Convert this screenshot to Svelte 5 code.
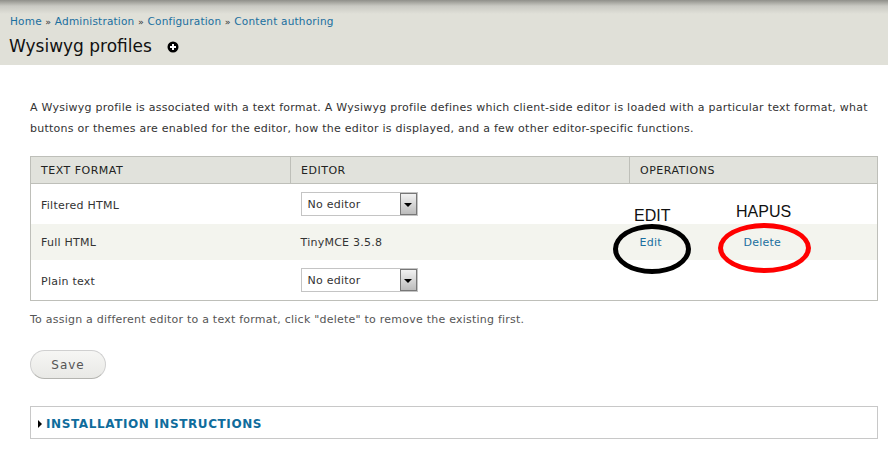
<script>
    const rows = [
        { format: 'Filtered HTML', select: true },
        { format: 'Full HTML', select: false },
        { format: 'Plain text', select: true }
    ];
</script>

<div class="page">
    <header class="head">
        <nav class="crumbs">
            <a href="#home">Home</a><span class="sep">»</span><a href="#admin">Administration</a><span class="sep">»</span><a href="#config">Configuration</a><span class="sep">»</span><a href="#content">Content authoring</a>
        </nav>
        <h1>
            Wysiwyg profiles
            <svg class="plus" viewBox="0 0 12 12" width="12" height="12">
                <circle cx="6" cy="6" r="5.5" fill="#000" />
                <path d="M6 3v6M3 6h6" stroke="#fff" stroke-width="2" />
            </svg>
        </h1>
    </header>

    <main class="content">
        <p class="intro">
            A Wysiwyg profile is associated with a text format. A Wysiwyg profile defines which client-side editor is loaded with a particular text format, what<br />
            buttons or themes are enabled for the editor, how the editor is displayed, and a few other editor-specific functions.
        </p>

        <div class="table-wrap">
            <table>
                <thead>
                    <tr>
                        <th class="col-format">TEXT FORMAT</th>
                        <th class="col-editor">EDITOR</th>
                        <th>OPERATIONS</th>
                    </tr>
                </thead>
                <tbody>
                    {#each rows as row}
                        <tr class:shaded={!row.select}>
                            <td class="name">{row.format}</td>
                            <td>
                                {#if row.select}
                                    <div class="select">
                                        <span class="value">No editor</span>
                                        <span class="arrow"></span>
                                    </div>
                                {:else}
                                    TinyMCE 3.5.8
                                {/if}
                            </td>
                            <td class="ops">
                                {#if !row.select}
                                    <a class="edit" href="#edit">Edit</a>
                                    <a class="delete" href="#delete">Delete</a>
                                {/if}
                            </td>
                        </tr>
                    {/each}
                </tbody>
            </table>

            <span class="note note-edit">EDIT</span>
            <span class="note note-hapus">HAPUS</span>
            <span class="ring ring-edit"></span>
            <span class="ring ring-delete"></span>
        </div>

        <p class="hint">To assign a different editor to a text format, click "delete" to remove the existing first.</p>

        <button class="save" type="button">Save</button>

        <div class="fieldset">
            <span class="triangle"></span>
            <a href="#install">INSTALLATION INSTRUCTIONS</a>
        </div>
    </main>
</div>

<style>
    :global(body) {
        background: #fff;
    }

    .page {
        width: 888px;
        height: 449px;
        overflow: hidden;
        font-family: "DejaVu Sans", sans-serif;
        font-size: 11px;
        letter-spacing: 0.25px;
        color: #333;
    }

    a {
        color: #1a6f9f;
        text-decoration: none;
    }

    .head {
        height: 65px;
        box-sizing: border-box;
        padding: 15px 10px 0;
        background: linear-gradient(#8f8f8a, #c9c9c3 6px, #e0e0d8 14px);
    }

    .crumbs {
        height: 14px;
        line-height: 13px;
        font-size: 10.5px;
        letter-spacing: 0.2px;
    }

    .sep {
        margin: 0 3.5px;
        font-size: 9.5px;
        color: #333;
    }

    h1 {
        margin: 5px 0 0 -1px;
        font-size: 17px;
        line-height: 24px;
        font-weight: 400;
        letter-spacing: 0;
        color: #111;
        display: flex;
        align-items: center;
        gap: 15px;
    }

    .plus {
        margin-top: 2px;
    }

    .content {
        padding: 0 10px 0 30px;
    }

    .intro {
        margin: 32px 0 0;
        line-height: 21px;
        white-space: nowrap;
    }

    .table-wrap {
        position: relative;
        margin-top: 17px;
    }

    table {
        width: 848px;
        border-collapse: collapse;
        table-layout: fixed;
        border: 1px solid #bebfb9;
    }

    th {
        height: 27px;
        padding: 0 10px;
        box-sizing: border-box;
        background: #e1e2dc;
        border-bottom: 1px solid #bebfb9;
        border-left: 1px solid #bebfb9;
        font-weight: 400;
        letter-spacing: 0.5px;
        text-align: left;
        color: #222;
    }

    th:first-child {
        border-left: 0;
    }

    .col-format {
        width: 260px;
    }

    .col-editor {
        width: 339px;
    }

    td {
        height: 40px;
        padding: 0 10px;
        box-sizing: border-box;
        color: #333;
    }

    tr:last-child td {
        height: 41px;
    }

    td.name {
        padding-top: 4px;
    }

    .shaded td {
        height: 36px;
        padding-top: 2px;
        background: #f3f4ee;
    }

    .select {
        display: flex;
        align-items: stretch;
        width: 117px;
        height: 24px;
        box-sizing: border-box;
        border: 1px solid #c4c4c4;
        background: #fff;
        font-size: 11px;
    }

    .value {
        flex: 1;
        align-self: center;
        padding: 2px 0 0 6px;
    }

    .arrow {
        position: relative;
        width: 17px;
        box-sizing: border-box;
        border: 1px solid #777;
        background: linear-gradient(#f2f2f2, #bcbcbc);
    }

    .arrow::after {
        content: "";
        position: absolute;
        left: 3px;
        top: 9px;
        border: 4px solid transparent;
        border-top: 4px solid #000;
        border-bottom: 0;
    }

    .ops {
        position: relative;
    }

    .edit {
        position: absolute;
        left: 10px;
        top: 12px;
    }

    .delete {
        position: absolute;
        left: 114px;
        top: 12px;
    }

    .note {
        position: absolute;
        font-family: "Liberation Sans", sans-serif;
        font-size: 16px;
        letter-spacing: 0;
        color: #111;
        line-height: 18px;
    }

    .note-edit {
        left: 604px;
        top: 51px;
    }

    .note-hapus {
        left: 706px;
        top: 47px;
    }

    .ring {
        position: absolute;
        box-sizing: border-box;
        border-radius: 50%;
        border-style: solid;
        border-width: 5px;
    }

    .ring-edit {
        left: 583px;
        top: 68px;
        width: 78px;
        height: 50px;
        border-color: #000;
    }

    .ring-delete {
        left: 688px;
        top: 67px;
        width: 93px;
        height: 50px;
        border-color: #f00;
    }

    .hint {
        margin: 12px 0 0;
        line-height: 14px;
        letter-spacing: 0.23px;
        color: #555;
    }

    .save {
        display: block;
        margin-top: 23px;
        width: 76px;
        height: 29px;
        padding: 0;
        border: 1px solid #d0d0d0;
        border-bottom-color: #b4b4b0;
        border-radius: 15px;
        background: linear-gradient(#f6f6f4, #e9e9e6);
        font-family: inherit;
        font-size: 12px;
        letter-spacing: 1px;
        color: #555;
    }

    .fieldset {
        display: flex;
        align-items: center;
        gap: 4px;
        margin-top: 27px;
        width: 848px;
        height: 33px;
        box-sizing: border-box;
        padding: 3px 0 0 7px;
        border: 1px solid #c8c8c8;
    }

    .fieldset a {
        font-size: 12px;
        font-weight: 700;
        letter-spacing: 0.6px;
        color: #0f6c9c;
    }

    .triangle {
        border: 4px solid transparent;
        border-left: 4px solid #000;
        border-right: 0;
    }
</style>
